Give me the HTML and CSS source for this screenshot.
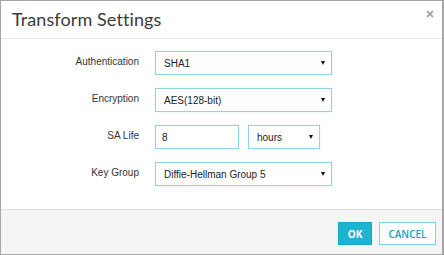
FILE: index.html
```html
<!DOCTYPE html>
<html lang="en">
<head>
    <meta charset="UTF-8">
    <meta name="viewport" content="width=device-width, initial-scale=1.0">
    <title>Transform Settings</title>
    <link rel="stylesheet" href="styles.css">
</head>
<body>
    <div class="dialog">
        <!-- Header -->
        <div class="dialog-header">
            <h1 class="dialog-title">Transform Settings</h1>
            <span class="close-btn">
                <svg width="8" height="8" viewBox="0 0 8 8">
                    <path d="M1 1 L7 7 M7 1 L1 7" stroke="#a9a9a9" stroke-width="1.8"/>
                </svg>
            </span>
        </div>

        <!-- Form -->
        <div class="dialog-body">
            <div class="form-row">
                <label class="form-label">Authentication</label>
                <div class="field">
                    <div class="select wide"><span>SHA1</span><i class="caret"></i></div>
                </div>
            </div>
            <div class="form-row">
                <label class="form-label">Encryption</label>
                <div class="field">
                    <div class="select wide"><span>AES(128-bit)</span><i class="caret"></i></div>
                </div>
            </div>
            <div class="form-row">
                <label class="form-label">SA Life</label>
                <div class="field">
                    <div class="text-input"><span>8</span></div>
                    <div class="select unit"><span>hours</span><i class="caret"></i></div>
                </div>
            </div>
            <div class="form-row">
                <label class="form-label">Key Group</label>
                <div class="field">
                    <div class="select wide"><span>Diffie-Hellman Group 5</span><i class="caret"></i></div>
                </div>
            </div>
        </div>

        <!-- Footer -->
        <div class="dialog-footer">
            <button class="btn btn-primary">OK</button>
            <button class="btn btn-default">CANCEL</button>
        </div>
    </div>
</body>
</html>
```

FILE: styles.css
```css
/* Reset */
* {
    margin: 0;
    padding: 0;
    box-sizing: border-box;
}

:root {
    --accent: #1fb3d2;
    --field-border: #8fd5e6;
    --text-color: #333;
}

html, body {
    width: 444px;
    height: 255px;
    background: #fff;
    font-family: 'Liberation Sans', Arial, sans-serif;
    color: var(--text-color);
    overflow: hidden;
}

/* Dialog */
.dialog {
    width: 444px;
    height: 255px;
    border: 1px solid #a6a6a6;
    border-right-width: 2px;
    display: flex;
    flex-direction: column;
}

.dialog-header {
    height: 38px;
    border-bottom: 1px solid #e5e5e5;
    display: flex;
    align-items: center;
    justify-content: space-between;
    padding: 0 8px 0 11px;
}

.dialog-title {
    font-family: 'Lato', sans-serif;
    font-weight: 400;
    font-size: 18px;
    letter-spacing: 0.1px;
    color: #3a3a3a;
    margin-top: -1px;
}

.close-btn {
    display: flex;
    margin-top: -11px;
}

/* Form */
.dialog-body {
    flex: 1;
    padding-top: 12px;
    display: flex;
    flex-direction: column;
    gap: 13px;
}

.form-row {
    display: grid;
    grid-template-columns: 138px 1fr;
    column-gap: 16px;
    align-items: center;
    height: 24px;
}

.form-label {
    text-align: right;
    font-size: 10px;
    margin-top: -3px;
}

.field {
    display: flex;
    gap: 9px;
    height: 24px;
}

.select, .text-input {
    height: 24px;
    border: 1px solid var(--field-border);
    box-shadow: 0 0 1px rgba(100, 200, 225, 0.5);
    display: flex;
    align-items: center;
    justify-content: space-between;
    font-size: 10px;
    color: #222;
    background: #fff;
}

.select span {
    padding-left: 8px;
}

.text-input span {
    padding-left: 6px;
}

.wide {
    width: 177px;
}

.text-input {
    width: 84px;
}

.unit {
    width: 72px;
}

.caret {
    width: 0;
    height: 0;
    border-left: 2.5px solid transparent;
    border-right: 2.5px solid transparent;
    border-top: 4px solid #111;
    margin-right: 6px;
    margin-top: -1px;
}

/* Footer */
.dialog-footer {
    height: 45px;
    background: #f5f5f5;
    border-top: 1px solid #dedede;
    display: flex;
    justify-content: flex-end;
    align-items: flex-start;
    gap: 7px;
    padding: 12px 6px 0 0;
}

.btn {
    height: 23px;
    font-family: 'Open Sans', sans-serif;
    font-size: 10px;
    cursor: pointer;
}

.btn-primary {
    width: 34px;
    background: var(--accent);
    border: 1px solid #17a6c6;
    color: #fff;
    font-weight: 700;
}

.btn-default {
    width: 57px;
    background: #fff;
    border: 1px solid #7fd3e6;
    color: #1a9fc0;
    font-weight: 600;
}
```
